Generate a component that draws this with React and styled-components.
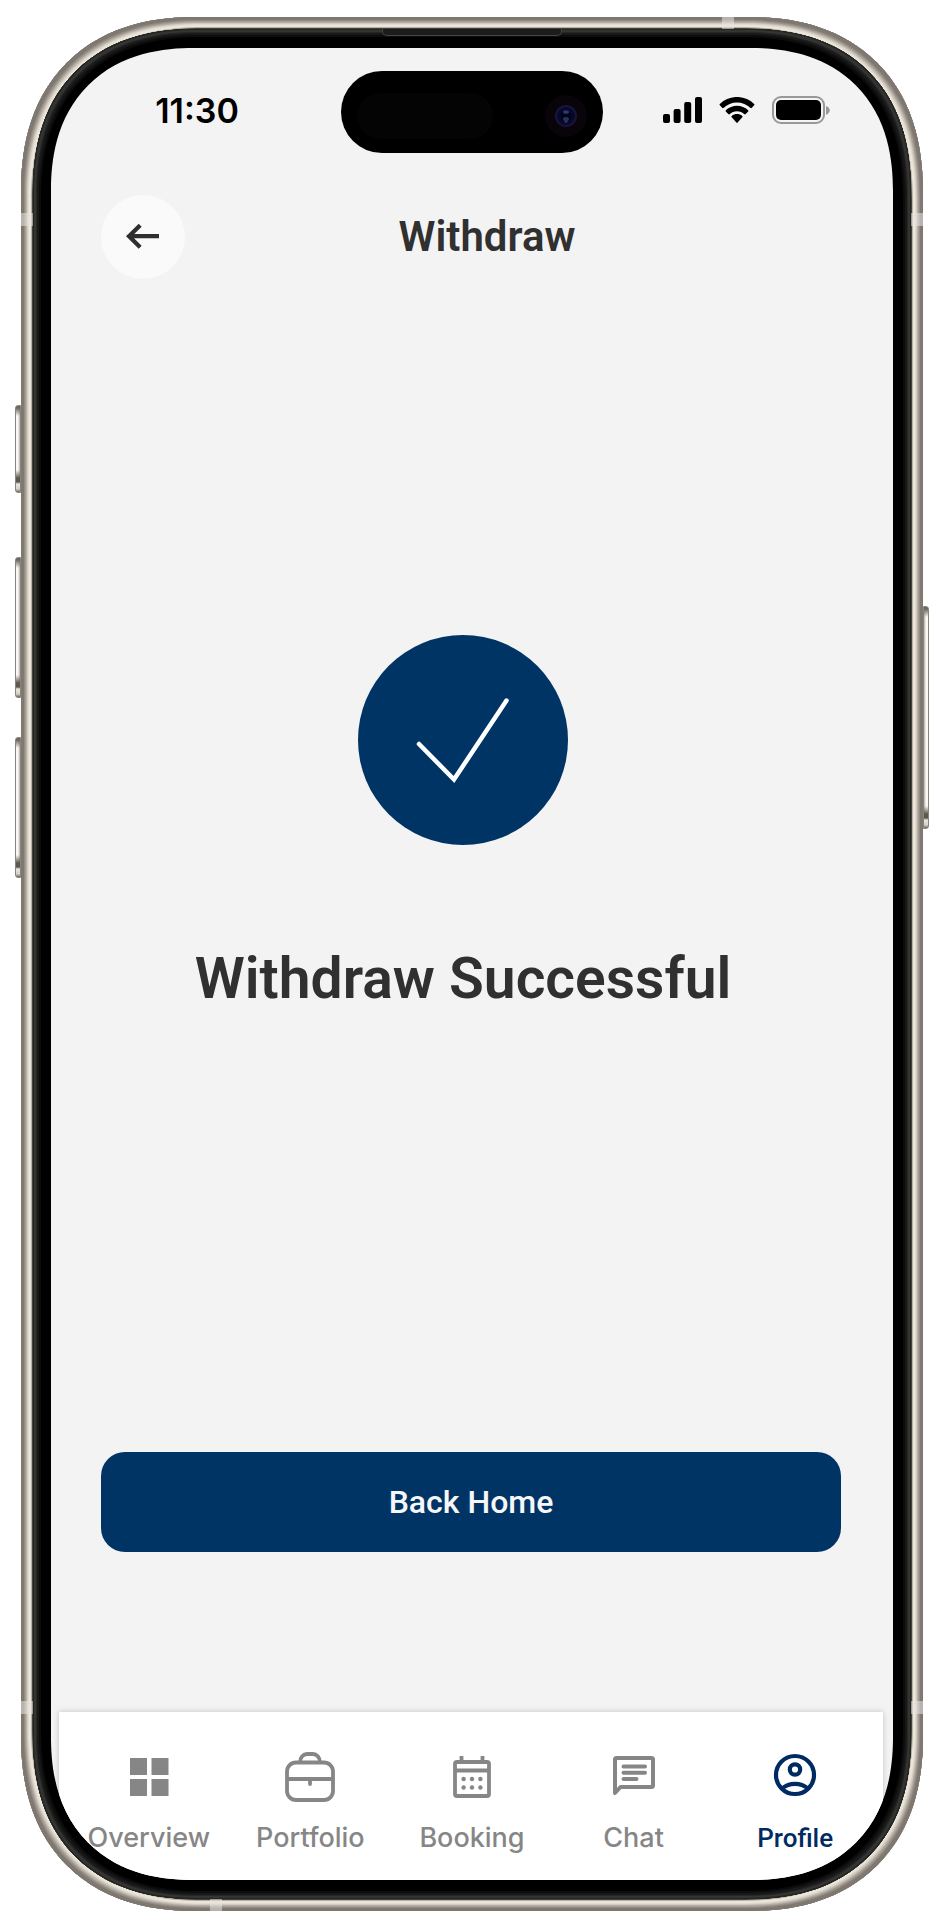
import React from "react";
import styled, { createGlobalStyle } from "styled-components";

const GlobalStyle = createGlobalStyle`
  *, *::before, *::after { box-sizing: border-box; }
  body { margin: 0; background: #fff; }
`;

const Page = styled.div`
  min-height: 100vh;
  display: flex;
  padding: 17px 21px;
  font-family: Roboto, "Liberation Sans", sans-serif;
  color: #303030;
`;

/* Device shell */

const Phone = styled.div`
  position: relative;
  flex: 1;
  display: flex;
  padding: 12px;
  border-radius: 176px;
  corner-shape: superellipse(1.2);
  background: #45413b;
  box-shadow:
    inset 0 0 0 1px #7d776f,
    inset 0 0 0 3px #7f7972,
    inset 0 0 0 4px #938c84,
    inset 0 0 0 5px #a49d94,
    inset 0 0 0 6px #b9b2a8,
    inset 0 0 0 7px #d0c9bf,
    inset 0 0 0 8px #e2dbd1,
    inset 0 0 0 10px #ece5da,
    inset 0 0 0 11px #b5aea4;
`;

const Bezel = styled.div`
  position: relative;
  flex: 1;
  display: flex;
  padding: 19px 18px;
  border-radius: 163px;
  corner-shape: superellipse(1.2);
  background: #000;
  box-shadow:
    inset 0 0 0 1px #242421,
    inset 0 0 0 3px #343532,
    inset 0 0 0 4px #262726,
    inset 0 0 0 6px #181818,
    inset 0 0 0 8px #0c0c0c;
`;

const Screen = styled.div`
  flex: 1;
  display: flex;
  flex-direction: column;
  min-width: 0;
  overflow: hidden;
  border-radius: 143px;
  corner-shape: superellipse(1.2);
  background: #f3f3f3;
`;

const Speaker = styled.span`
  position: absolute;
  top: 0;
  left: 50%;
  width: 180px;
  height: 7px;
  margin-left: -90px;
  border: 1px solid #454545;
  border-top: 0;
  border-radius: 0 0 5px 5px;
  background: #1b1c1b;
`;

const Band = styled.span`
  position: absolute;
  background: rgba(232, 228, 224, 0.55);
  ${({ $side, $at }) =>
    $side === "top" || $side === "bottom"
      ? `${$side}: 0; ${$at}; width: 12px; height: 12px;`
      : `${$side}: 0; ${$at}; width: 12px; height: 13px;`}
`;

const SideKey = styled.span`
  position: absolute;
  ${({ $side }) => $side}: -6px;
  top: ${({ $top }) => $top}px;
  width: 6px;
  height: ${({ $height }) => $height}px;
  border: 1px solid #8a847c;
  border-radius: ${({ $side }) => ($side === "left" ? "3px 0 0 3px" : "0 3px 3px 0")};
  background:
    linear-gradient(#6d675e 0 2px, transparent 10px calc(100% - 22px), #5d584c calc(100% - 14px), #5d584c calc(100% - 10px), #e8e5e0 calc(100% - 8px), #d5d0c8 calc(100% - 3px), #6d675e),
    linear-gradient(to ${({ $side }) => ($side === "left" ? "right" : "left")}, #f8f7f5 0 2px, #b5aea5 4px);
`;

/* Status bar */

const StatusBar = styled.div`
  display: grid;
  grid-template-columns: 1fr 262px 1fr;
  align-items: center;
  padding-top: 23px;
`;

const Time = styled.time`
  padding: 0 0 2px 2px;
  text-align: center;
  font: 600 34px/40px Inter, sans-serif;
  color: #000;
`;

const Island = styled.div`
  height: 82px;
  border-radius: 41px;
  background: #000;
`;

const StatusIcons = styled.div`
  display: flex;
  justify-content: center;
  align-items: center;
  gap: 17px;
  padding: 0 4px 4px 0;
`;

/* Header */

const Header = styled.header`
  display: grid;
  grid-template-columns: 84px 1fr 52px;
  align-items: center;
  margin-top: 42px;
  padding: 0 52px 0 50px;
`;

const BackButton = styled.button`
  width: 84px;
  height: 84px;
  padding: 0;
  border: 0;
  border-radius: 50%;
  background: #fafafa;
  cursor: pointer;

  svg { display: block; }
`;

const Title = styled.h1`
  margin: 0;
  text-align: center;
  font-size: 42px;
  line-height: 48px;
  font-weight: 600;
`;

/* Result */

const Result = styled.main`
  flex: 1;
  display: flex;
  flex-direction: column;
  align-items: center;
  justify-content: center;
  gap: 100px;
  padding: 0 68px 84px 50px;
`;

const Badge = styled.div`
  width: 210px;
  height: 210px;
  border-radius: 50%;
  background: #003465;
`;

const Message = styled.h2`
  margin: 0;
  text-align: center;
  font-size: 57px;
  line-height: 68px;
  font-weight: 600;
`;

const HomeButton = styled.button`
  height: 100px;
  margin: 0 52px 160px 50px;
  border: 0;
  border-radius: 24px;
  background: #003465;
  color: #f7f7f7;
  font: 500 32px/40px Roboto, sans-serif;
  cursor: pointer;
`;

/* Bottom navigation */

const Nav = styled.nav`
  display: grid;
  grid-template-columns: repeat(5, 1fr);
  height: 168px;
  margin: 0 10px 0 8px;
  padding: 40px 7px 0 9px;
  background: #fff;
  box-shadow: 0 0 6px rgba(0, 0, 0, 0.2);
`;

const NavItem = styled.a`
  display: flex;
  flex-direction: column;
  align-items: center;
  gap: 20px;
  color: ${({ $active }) => ($active ? "#002b62" : "#868686")};
  font: ${({ $active }) => ($active ? "500 26px/32px Roboto" : "500 27px/32px Inter")}, sans-serif;
  text-decoration: none;
`;

function Signal() {
  return (
    <svg width="39" height="26" viewBox="0 0 39 26" aria-hidden="true">
      <rect x="0" y="17" width="7" height="9" rx="2" />
      <rect x="10.6" y="12" width="7" height="14" rx="2" />
      <rect x="21.2" y="5" width="7" height="21" rx="2" />
      <rect x="32" y="0" width="7" height="26" rx="2" />
    </svg>
  );
}

function Wifi() {
  return (
    <svg width="36" height="26" viewBox="0 0 17 12" preserveAspectRatio="none" aria-hidden="true">
      <path d="M8.5 2.5c2.4 0 4.7.9 6.4 2.6.1.1.3.1.5 0l1.2-1.3c.2-.2.2-.4 0-.6C12.100-1.100 4.900-1.100.4 3.200c-.2.200-.2.400 0 .600l1.200 1.300c.200.100.400.100.500 0C3.800 3.400 6.100 2.500 8.500 2.500z" />
      <path d="M8.500 6.600c1.300 0 2.600.5 3.500 1.400.2.100.4.100.500 0l1.300-1.300c.1-.2.100-.400 0-.600-3-2.800-7.600-2.800-10.600 0-.1.200-.1.400 0 .600L4.500 8c.1.100.3.100.500 0 .9-.9 2.200-1.400 3.500-1.400z" />
      <path d="M11 9.300c.2-.1.200-.4 0-.5-1.500-1.200-3.500-1.200-5 0-.2.100-.2.400 0 .500l2.200 2.500c.2.200.4.200.600 0z" />
    </svg>
  );
}

function Battery() {
  return (
    <svg width="58" height="28" viewBox="0 0 58 28" aria-hidden="true">
      <rect x="1" y="1" width="51" height="26" rx="8" fill="none" stroke="#999" strokeWidth="2" />
      <rect x="4" y="4" width="45" height="20" rx="5" />
      <path d="M54 10c5 2 5 6 0 9z" fill="#999" />
    </svg>
  );
}

function IslandSensors() {
  return (
    <svg width="262" height="82" viewBox="0 0 262 82" aria-hidden="true">
      <rect x="16" y="22" width="136" height="46" rx="23" fill="#040404" />
      <circle cx="225" cy="45" r="21" fill="#08040a" />
      <circle cx="225" cy="45" r="10" fill="#08082c" stroke="#16163c" strokeWidth="2" />
      <circle cx="225" cy="45" r="5.500" fill="#020218" />
      <ellipse cx="225" cy="41" rx="3" ry="1.800" fill="#34347c" />
      <ellipse cx="225" cy="48" rx="3" ry="2" fill="#103f52" />
      <circle cx="225" cy="50.500" r="1.500" fill="#591d75" />
    </svg>
  );
}

function ArrowLeft() {
  return (
    <svg width="84" height="84" viewBox="0 0 84 84" fill="none" stroke="#2f2f2f" strokeWidth="4.200" aria-hidden="true">
      <path d="M58 41.200H28M39.200 30.200L28 41.200l11.200 11" />
    </svg>
  );
}

function Check() {
  return (
    <svg width="210" height="210" viewBox="0 0 210 210" fill="none" stroke="#fff" strokeWidth="4.500" strokeLinecap="round" role="img" aria-label="Success">
      <path d="M61 109l35 35.500 52.500-79" />
    </svg>
  );
}

function OverviewIcon() {
  return (
    <svg width="50" height="50" viewBox="0 0 50 50" fill="currentColor" aria-hidden="true">
      <path d="M6 6h17v17H6zM27.500 6h17v17h-17zM6 27h17v17H6zM27.500 27h17v17h-17z" />
    </svg>
  );
}

function PortfolioIcon() {
  return (
    <svg width="50" height="50" viewBox="0 0 50 50" fill="none" stroke="currentColor" strokeWidth="3.800" aria-hidden="true">
      <rect x="2" y="10.500" width="46" height="37.500" rx="9" />
      <path d="M15 10.500c0-5.500 3.500-8.500 7-8.500h6c3.500 0 7 3 7 8.500M2 27h46" />
      <path d="M25 28v4" strokeLinecap="round" />
    </svg>
  );
}

function BookingIcon() {
  return (
    <svg width="50" height="50" viewBox="0 0 50 50" fill="none" stroke="currentColor" strokeWidth="3.800" aria-hidden="true">
      <rect x="8" y="10" width="34" height="34" rx="2" />
      <path d="M8 18.500h34M14.500 4v6M35.500 4v6" />
      <g fill="currentColor" stroke="none">
        {[16.600, 25, 33.400].map((x) => (
          <React.Fragment key={x}>
            <circle cx={x} cy="27" r="2.200" />
            <circle cx={x} cy="35.500" r="2.200" />
          </React.Fragment>
        ))}
      </g>
    </svg>
  );
}

function ChatIcon() {
  return (
    <svg width="50" height="50" viewBox="0 0 50 50" fill="none" stroke="currentColor" strokeWidth="4" strokeLinejoin="round" strokeLinecap="round" aria-hidden="true">
      <path d="M6 41V7.500Q6 6 7.500 6h35Q44 6 44 7.500v26q0 1.500-1.500 1.500H11.500z" />
      <path d="M14.500 14.500h21.500M14.500 20.700h21.500M14.500 27h13" />
    </svg>
  );
}

function ProfileIcon() {
  return (
    <svg width="50" height="50" viewBox="0 0 50 50" fill="none" stroke="currentColor" strokeWidth="4.200" aria-hidden="true">
      <circle cx="25" cy="23" r="19" />
      <circle cx="25" cy="17.500" r="5.200" />
      <path d="M12 36.500c7.500-6.200 18.500-6.200 26 0" />
    </svg>
  );
}

const BANDS = [
  ["left", "top: 196px"],
  ["right", "top: 196px"],
  ["left", "bottom: 197px"],
  ["right", "bottom: 197px"],
  ["top", "right: 189px"],
  ["bottom", "left: 189px"],
];

const KEYS = [
  ["left", 388, 88],
  ["left", 540, 141],
  ["left", 720, 141],
  ["right", 589, 223],
];

const TABS = [
  ["Overview", OverviewIcon],
  ["Portfolio", PortfolioIcon],
  ["Booking", BookingIcon],
  ["Chat", ChatIcon],
  ["Profile", ProfileIcon],
];

export default function App() {
  return (
    <Page>
      <GlobalStyle />
      <Phone>
        {KEYS.map(([side, top, height]) => (
          <SideKey key={side + top} $side={side} $top={top} $height={height} />
        ))}
        {BANDS.map(([side, at]) => (
          <Band key={side + at} $side={side} $at={at} />
        ))}
        <Bezel>
          <Speaker />
          <Screen>
            <StatusBar>
              <Time>11:30</Time>
              <Island>
                <IslandSensors />
              </Island>
              <StatusIcons>
                <Signal />
                <Wifi />
                <Battery />
              </StatusIcons>
            </StatusBar>
            <Header>
              <BackButton type="button" aria-label="Back">
                <ArrowLeft />
              </BackButton>
              <Title>Withdraw</Title>
            </Header>
            <Result>
              <Badge>
                <Check />
              </Badge>
              <Message>Withdraw Successful</Message>
            </Result>
            <HomeButton type="button">Back Home</HomeButton>
            <Nav aria-label="Main">
              {TABS.map(([label, Icon]) => (
                <NavItem
                  key={label}
                  href={`#${label.toLowerCase()}`}
                  $active={label === "Profile"}
                  aria-current={label === "Profile" ? "page" : undefined}
                >
                  <Icon />
                  {label}
                </NavItem>
              ))}
            </Nav>
          </Screen>
        </Bezel>
      </Phone>
    </Page>
  );
}
